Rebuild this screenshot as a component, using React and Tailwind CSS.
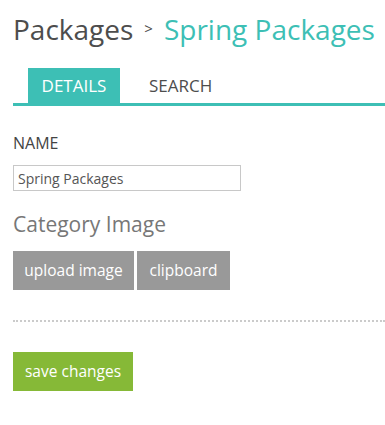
import React from "react";

const App = () => {
  return (
    <div className="w-[385px] h-[425px] bg-white overflow-hidden font-['Open_Sans',sans-serif]">
      {/* Breadcrumb title */}
      <div className="pl-[13px] pt-[15px] flex items-baseline whitespace-nowrap leading-none text-[28px]">
        <span className="text-[#4d4d4d]">Packages</span>
        <span className="text-[15px] text-[#4d4d4d] mx-[11px] relative -top-[6px]">&gt;</span>
        <span className="text-[#3dbfb5]">Spring Packages</span>
      </div>

      {/* Tabs */}
      <div className="ml-[13px] mt-[25px] border-b-[3px] border-[#3dbfb5] flex items-end pl-[15px]">
        <div className="bg-[#3dbfb5] text-white text-[17px] h-[35px] w-[92px] flex items-center justify-center">
          DETAILS
        </div>
        <div className="text-[#4d4d4d] text-[17px] h-[35px] flex items-center ml-[29px]">
          SEARCH
        </div>
      </div>

      {/* Form */}
      <div className="px-[13px] pt-[29px]">
        <div className="text-[16px] text-[#444] leading-none">NAME</div>
        <input
          type="text"
          defaultValue="Spring Packages"
          className="block mt-[14px] w-[228px] h-[26px] border border-[#c8c8c8] px-[4px] text-[14px] text-[#555] outline-none"
        />

        <div className="mt-[23px] text-[21px] text-[#777] leading-none">Category Image</div>
        <div className="mt-[16px] flex gap-[3px]">
          <button className="bg-[#999] text-white text-[15.5px] h-[39px] w-[121px]">upload image</button>
          <button className="bg-[#999] text-white text-[15.5px] h-[39px] w-[93px]">clipboard</button>
        </div>
      </div>

      <div className="ml-[13px] mt-[30px] border-t-2 border-dotted border-[#cbcbcb]" />

      <div className="px-[13px] pt-[30px]">
        <button className="bg-[#86b937] text-white text-[15.5px] h-[39px] w-[120px]">save changes</button>
      </div>
    </div>
  );
};

export default App;
